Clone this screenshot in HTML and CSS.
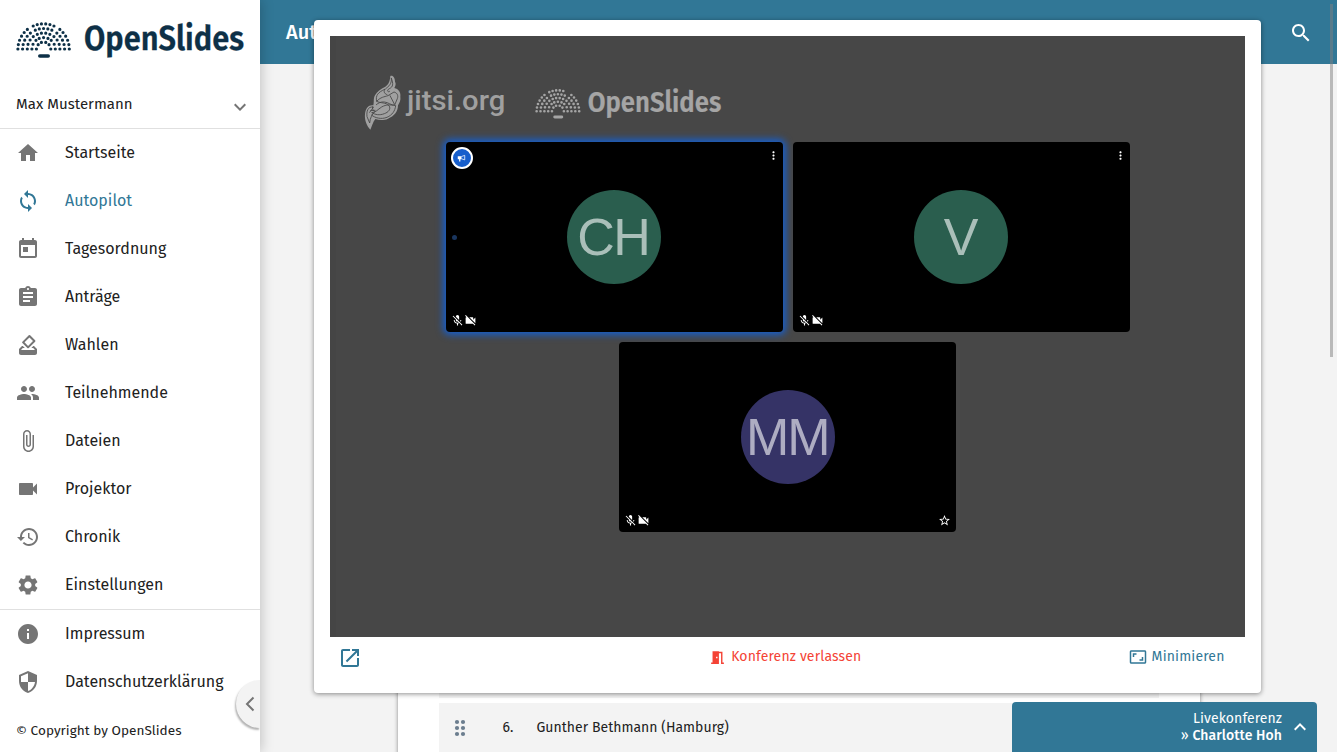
FILE: index.html
```html
<!DOCTYPE html>
<html lang="de">
<head>
<meta charset="utf-8">
<title>OpenSlides – Autopilot</title>
<link rel="stylesheet" href="styles.css">
</head>
<body>
<svg class="defs" aria-hidden="true">
  <symbol id="plenum" viewBox="0 0 56 38">
    <g transform="translate(27.6 28)" fill="none" stroke="currentColor" stroke-width="3.2" stroke-linecap="round" stroke-dasharray="0 1">
      <g id="wedge">
        <path pathLength="5.01" d="M-25.7 0A25.7 25.7 0 0 1-16.2-19.6"/>
        <path pathLength="4.01" d="M-21 0A21 21 0 0 1-13.2-16"/>
        <path pathLength="3.01" d="M-16.3 0A16.3 16.3 0 0 1-10.3-12.5"/>
        <path pathLength="2.01" d="M-11.7 0A11.7 11.7 0 0 1-7.6-8.7"/>
        <path pathLength="1.01" d="M-7.2 0A7 7 0 0 1-5.4-4.4"/>
      </g>
      <use href="#wedge" transform="scale(-1 1)"/>
      <path pathLength="5.01" d="M-10.4-23A25.7 25.7 0 0 1 10.4-23"/>
      <path pathLength="4.01" d="M-8.3-18.8A21 21 0 0 1 8.3-18.8"/>
      <path pathLength="3.01" d="M-6.3-14.7A16.3 16.3 0 0 1 6.3-14.7"/>
      <path pathLength="2.01" d="M-4.4-10.6A11.7 11.7 0 0 1 4.4-10.6"/>
      <path pathLength="1.01" d="M-2.2-6.6L2.2-6.6"/>
    </g>
    <rect x="22" y="33.2" width="12" height="3.6" rx="1.8" fill="currentColor"/>
  </symbol>
  <symbol id="micoff" viewBox="0 0 24 24"><path d="M19 11h-1.7c0 .74-.16 1.43-.43 2.05l1.23 1.23c.56-.98.9-2.09.9-3.28zm-4.02.17c0-.06.02-.11.02-.17V5c0-1.66-1.34-3-3-3S9 3.34 9 5v.18l5.98 5.99zM4.27 3L3 4.27l6.01 6.01V11c0 1.66 1.33 3 2.99 3 .22 0 .44-.03.65-.08l1.66 1.66c-.71.33-1.5.52-2.31.52-2.76 0-5.3-2.1-5.3-5.1H5c0 3.41 2.72 6.23 6 6.72V21h2v-3.28c.91-.13 1.77-.45 2.54-.9L19.73 21 21 19.73 4.27 3z"/></symbol>
  <symbol id="camoff" viewBox="0 0 24 24"><path d="M21 6.5l-4 4V7c0-.55-.45-1-1-1H9.82L21 17.18V6.5zM3.27 2L2 3.27 4.73 6H4c-.55 0-1 .45-1 1v10c0 .55.45 1 1 1h12c.21 0 .39-.08.54-.18L19.73 21 21 19.73 3.27 2z"/></symbol>
  <symbol id="more" viewBox="0 0 24 24"><path d="M12 8c1.1 0 2-.9 2-2s-.9-2-2-2-2 .9-2 2 .9 2 2 2zm0 2c-1.1 0-2 .9-2 2s.9 2 2 2 2-.9 2-2-.9-2-2-2zm0 6c-1.1 0-2 .9-2 2s.9 2 2 2 2-.9 2-2-.9-2-2-2z"/></symbol>
</svg>

<div class="app">
  <aside class="sidebar">
    <div class="logo">
      <svg class="plenum"><use href="#plenum"/></svg>
      <svg class="word" viewBox="0 0 161 38"><text x="0" y="28.5" class="wordmark" textLength="160" lengthAdjust="spacingAndGlyphs">OpenSlides</text></svg>
    </div>
    <div class="user"><span>Max Mustermann</span><svg class="icon" viewBox="0 0 24 24"><path d="M16.59 8.59L12 13.17 7.41 8.59 6 10l6 6 6-6z"/></svg></div>
    <nav class="menu">
      <a class="item"><svg class="icon" viewBox="0 0 24 24"><path d="M10 20v-6h4v6h5v-8h3L12 3 2 12h3v8z"/></svg><span>Startseite</span></a>
      <a class="item active"><svg class="icon" viewBox="0 0 24 24"><path d="M12 4V1L8 5l4 4V6c3.31 0 6 2.69 6 6 0 1.01-.25 1.97-.7 2.8l1.46 1.46C19.54 15.03 20 13.57 20 12c0-4.42-3.58-8-8-8zm0 14c-3.31 0-6-2.69-6-6 0-1.01.25-1.97.7-2.8L5.24 7.74C4.46 8.97 4 10.43 4 12c0 4.42 3.58 8 8 8v3l4-4-4-4v3z"/></svg><span>Autopilot</span></a>
      <a class="item"><svg class="icon" viewBox="0 0 24 24"><path d="M19 3h-1V1h-2v2H8V1H6v2H5c-1.11 0-1.99.9-1.99 2L3 19c0 1.1.89 2 2 2h14c1.1 0 2-.9 2-2V5c0-1.1-.9-2-2-2zm0 16H5V8h14v11zM7 10h5v5H7z"/></svg><span>Tagesordnung</span></a>
      <a class="item"><svg class="icon" viewBox="0 0 24 24"><path d="M19 3h-4.18C14.4 1.84 13.3 1 12 1c-1.3 0-2.4.84-2.82 2H5c-1.1 0-2 .9-2 2v14c0 1.1.9 2 2 2h14c1.1 0 2-.9 2-2V5c0-1.1-.9-2-2-2zm-7 0c.55 0 1 .45 1 1s-.45 1-1 1-1-.45-1-1 .45-1 1-1zm2 14H7v-2h7v2zm3-4H7v-2h10v2zm0-4H7V7h10v2z"/></svg><span>Anträge</span></a>
      <a class="item"><svg class="icon" viewBox="0 0 24 24"><path d="M18 13h-.68l-2 2h1.91L19 17H5l1.78-2h2.05l-2-2H6l-3 3v4c0 1.1.89 2 1.99 2H19c1.1 0 2-.89 2-2v-4l-3-3zm-1-5.05l-4.95 4.95-3.54-3.54 4.95-4.95L17 7.95zm-4.24-5.66L6.39 8.66a.996.996 0 0 0 0 1.41l4.95 4.95c.39.39 1.02.39 1.41 0l6.36-6.36a.996.996 0 0 0 0-1.41L14.16 2.3a.975.975 0 0 0-1.4-.01z"/></svg><span>Wahlen</span></a>
      <a class="item"><svg class="icon" viewBox="0 0 24 24"><path d="M16 11c1.66 0 2.99-1.34 2.99-3S17.66 5 16 5c-1.66 0-3 1.34-3 3s1.34 3 3 3zm-8 0c1.66 0 2.99-1.34 2.99-3S9.66 5 8 5C6.34 5 5 6.34 5 8s1.34 3 3 3zm0 2c-2.33 0-7 1.17-7 3.5V19h14v-2.5c0-2.33-4.67-3.5-7-3.5zm8 0c-.29 0-.62.02-.97.05 1.16.84 1.97 1.97 1.97 3.45V19h6v-2.5c0-2.33-4.67-3.5-7-3.5z"/></svg><span>Teilnehmende</span></a>
      <a class="item"><svg class="icon" viewBox="0 0 24 24"><path d="M16.5 6v11.5c0 2.21-1.79 4-4 4s-4-1.79-4-4V5c0-1.38 1.12-2.5 2.5-2.5s2.5 1.12 2.5 2.5v10.5c0 .55-.45 1-1 1s-1-.45-1-1V6H10v9.5c0 1.38 1.12 2.5 2.5 2.5s2.5-1.12 2.5-2.5V5c0-2.21-1.79-4-4-4S7 2.79 7 5v12.5c0 3.04 2.46 5.5 5.5 5.5s5.5-2.46 5.5-5.5V6h-1.5z"/></svg><span>Dateien</span></a>
      <a class="item"><svg class="icon" viewBox="0 0 24 24"><path d="M17 10.5V7c0-.55-.45-1-1-1H4c-.55 0-1 .45-1 1v10c0 .55.45 1 1 1h12c.55 0 1-.45 1-1v-3.5l4 4v-11l-4 4z"/></svg><span>Projektor</span></a>
      <a class="item"><svg class="icon" viewBox="0 0 24 24"><path d="M13 3c-4.97 0-9 4.03-9 9H1l3.89 3.89.07.14L9 12H6c0-3.87 3.13-7 7-7s7 3.13 7 7-3.13 7-7 7c-1.93 0-3.68-.79-4.94-2.06l-1.42 1.42C8.27 19.99 10.51 21 13 21c4.97 0 9-4.03 9-9s-4.03-9-9-9zm-1 5v5l4.28 2.54.72-1.21-3.5-2.08V8H12z"/></svg><span>Chronik</span></a>
      <a class="item"><svg class="icon" viewBox="0 0 24 24"><path d="M19.14 12.94c.04-.3.06-.61.06-.94 0-.32-.02-.64-.07-.94l2.03-1.58c.18-.14.23-.41.12-.61l-1.92-3.32c-.12-.22-.37-.29-.59-.22l-2.39.96c-.5-.38-1.03-.7-1.62-.94l-.36-2.54c-.04-.24-.24-.41-.48-.41h-3.84c-.24 0-.43.17-.47.41l-.36 2.54c-.59.24-1.13.57-1.62.94l-2.39-.96c-.22-.08-.47 0-.59.22L2.74 8.87c-.12.21-.08.47.12.61l2.03 1.58c-.05.3-.09.63-.09.94s.02.64.07.94l-2.03 1.58c-.18.14-.23.41-.12.61l1.92 3.32c.12.22.37.29.59.22l2.39-.96c.5.38 1.03.7 1.62.94l.36 2.54c.05.24.24.41.48.41h3.84c.24 0 .44-.17.47-.41l.36-2.54c.59-.24 1.13-.56 1.62-.94l2.39.96c.22.08.47 0 .59-.22l1.92-3.32c.12-.22.07-.47-.12-.61l-2.01-1.58zM12 15.6c-1.98 0-3.6-1.62-3.6-3.6s1.62-3.6 3.6-3.6 3.6 1.62 3.6 3.6-1.62 3.6-3.6 3.6z"/></svg><span>Einstellungen</span></a>
    </nav>
    <nav class="menu">
      <a class="item"><svg class="icon" viewBox="0 0 24 24"><path d="M12 2C6.48 2 2 6.48 2 12s4.48 10 10 10 10-4.48 10-10S17.52 2 12 2zm1 15h-2v-6h2v6zm0-8h-2V7h2v2z"/></svg><span>Impressum</span></a>
      <a class="item"><svg class="icon" viewBox="0 0 24 24"><path d="M12 1L3 5v6c0 5.55 3.84 10.74 9 12 5.16-1.26 9-6.45 9-12V5l-9-4zm0 10.99h7c-.53 4.12-3.28 7.79-7 8.94V12H5V6.3l7-3.11v8.8z"/></svg><span>Datenschutzerklärung</span></a>
    </nav>
    <div class="copyright">© Copyright by OpenSlides</div>
    <div class="collapse"><svg viewBox="0 0 10 16"><path d="M8.5 1.5L2 8l6.5 6.5" fill="none" stroke="currentColor" stroke-width="2"/></svg></div>
  </aside>

  <main class="main">
    <header class="header"><h1>Autopilot</h1><svg class="icon" viewBox="0 0 24 24"><path d="M15.5 14h-.79l-.28-.27C15.41 12.59 16 11.11 16 9.5 16 5.91 13.09 3 9.5 3S3 5.91 3 9.5 5.91 16 9.5 16c1.61 0 3.09-.59 4.23-1.57l.27.28v.79l5 4.99L20.49 19l-4.99-5zm-6 0C7.01 14 5 11.99 5 9.5S7.01 5 9.5 5 14 7.01 14 9.5 11.99 14 9.5 14z"/></svg></header>
    <section class="card">
      <div class="row"></div>
      <div class="row">
        <svg class="grip" viewBox="0 0 12 18"><circle cx="3" cy="3" r="2.1"/><circle cx="9" cy="3" r="2.1"/><circle cx="3" cy="9" r="2.1"/><circle cx="9" cy="9" r="2.1"/><circle cx="3" cy="15" r="2.1"/><circle cx="9" cy="15" r="2.1"/></svg>
        <span class="num">6.</span><span class="speaker">Gunther Bethmann (Hamburg)</span>
      </div>
    </section>
  </main>
</div>

<div class="scrollbar"></div>

<div class="dialog">
  <div class="video">
    <div class="brands">
      <svg class="jitsi" viewBox="40 42 430 172">
        <path fill="#a0a0a0" d="M122 48c8-3 14 6 14 17 4 6 1 13-2 19 12 3 20 12 18 26 2 11-3 19-7 26 0 19-12 33-30 40-13 6-27 5-38 1-7 9-10 20-15 32-12-13-18-31-16-48 2-17 12-28 25-25 3-13-1-19 5-30 6-12 17-19 31-26 10-6 14-18 15-32z"/>
        <g fill="none" stroke="#474747" stroke-width="2.6" stroke-linecap="round">
          <path d="M125 55c7 17 5 26-6 31-9 4-5 13 1 8M125 55c2 17-8 24-17 31-8 7-5 15 4 18M105 88c-20 9-28 18-24 36 12-13 22-13 34-17l18-11c11 3 13 12 10 20l-8 19c-10 2-19-8-31-9-11-1-18 3-24 8M81 124c13 7 27 2 37 13 7 10-2 20-14 24-15 6-27 3-38-3 14-1 17-9 30-17 14-8 26-7 42-4-2 16-10 28-26 35-18 7-36 2-47-7M69 141c-15-2-19 14-17 29l8 19c1-16 8-26 15-34-5-5-8-8-6-14zM71 142l-11 15M121 107l13 25M76 151l-13 1"/>
        </g>
        <text x="172" y="151" class="jitsi-text" textLength="295" lengthAdjust="spacingAndGlyphs">jitsi.org</text>
      </svg>
      <div class="brand-os">
        <svg class="plenum"><use href="#plenum"/></svg>
        <svg class="word" viewBox="0 0 161 38"><text x="0" y="28.5" class="wordmark" textLength="161" lengthAdjust="spacingAndGlyphs">OpenSlides</text></svg>
      </div>
    </div>
    <div class="tiles">
      <div class="tile speaking">
        <div class="top"><span class="badge"><svg viewBox="0 0 12 10"><path d="M1 2.5h5v4H4.5v3H2.8v-3H1z" fill="#fff"/><path d="M6 3l4.3-1.5v6L6 6" fill="none" stroke="#fff" stroke-width="1"/></svg></span><svg class="dots"><use href="#more"/></svg></div>
        <div class="middle"><i class="level"></i><div class="avatar">CH</div></div>
        <div class="bottom"><svg class="small"><use href="#micoff"/></svg><svg class="small"><use href="#camoff"/></svg></div>
      </div>
      <div class="tile">
        <div class="top"><svg class="dots"><use href="#more"/></svg></div>
        <div class="middle"><div class="avatar">V</div></div>
        <div class="bottom"><svg class="small"><use href="#micoff"/></svg><svg class="small"><use href="#camoff"/></svg></div>
      </div>
      <div class="tile">
        <div class="top"></div>
        <div class="middle"><div class="avatar violet">MM</div></div>
        <div class="bottom"><svg class="small"><use href="#micoff"/></svg><svg class="small"><use href="#camoff"/></svg><svg class="small star" viewBox="0 0 24 24"><path d="M22 9.24l-7.19-.62L12 2 9.19 8.63 2 9.24l5.46 4.73L5.82 21 12 17.27 18.18 21l-1.63-7.03L22 9.24zM12 15.4l-3.76 2.27 1-4.28-3.32-2.88 4.38-.38L12 6.1l1.71 4.04 4.38.38-3.32 2.88 1 4.28L12 15.4z"/></svg></div>
      </div>
    </div>
  </div>
  <div class="actions">
    <svg class="icon open" viewBox="0 0 24 24"><path d="M19 19H5V5h7V3H5c-1.11 0-2 .9-2 2v14c0 1.1.89 2 2 2h14c1.1 0 2-.9 2-2v-7h-2v7zM14 3v2h3.59l-9.83 9.83 1.41 1.41L19 6.41V10h2V3h-7z"/></svg>
    <span class="action leave"><svg viewBox="0 0 24 24"><path d="M14 6v15H3v-2h2V3h9v1h5v15h2v2h-4V6h-3zm-4 5v2h2v-2h-2z"/></svg><span>Konferenz verlassen</span></span>
    <span class="action minimize"><svg viewBox="0 0 24 24"><path d="M19 12h-2v3h-3v2h5v-5zM7 9h3V7H5v5h2V9zm14-6H3c-1.1 0-2 .9-2 2v14c0 1.1.9 2 2 2h18c1.1 0 2-.9 2-2V5c0-1.1-.9-2-2-2zm0 16.01H3V4.99h18v14.02z"/></svg><span>Minimieren</span></span>
  </div>
</div>

<div class="livebar">
  <div class="livetext"><div class="live">Livekonferenz</div><div class="name">» <b>Charlotte Hoh</b></div></div>
  <svg class="icon" viewBox="0 0 24 24"><path d="M12 8l-6 6 1.41 1.41L12 10.83l4.59 4.58L18 14z"/></svg>
</div>
</body>
</html>
```
FILE: styles.css
```css
* { box-sizing: border-box; }
body { margin: 0; height: 752px; overflow: hidden; position: relative; font-family: "Fira Sans", "Noto Sans", sans-serif; color: #212121; background: #f3f3f3; }
svg { display: block; fill: currentColor; flex: none; overflow: visible; }
.defs { position: absolute; width: 0; height: 0; }
.icon { width: 24px; height: 24px; }
.app { display: flex; height: 752px; }

.sidebar { width: 260px; background: #fff; position: relative; z-index: 2; box-shadow: 1px 0 12px rgba(0,0,0,.22); clip-path: inset(0 -20px 0 0); flex: none; }
.logo { height: 37px; margin: 21px 0 0 16px; color: #0d3047; display: flex; gap: 11.5px; }
.logo .plenum { width: 56px; height: 38px; }
.logo .word { width: 161px; height: 38px; }
.wordmark { font: 600 34.5px "Fira Sans", "Noto Sans", sans-serif; fill: currentColor; stroke: currentColor; stroke-width: .3px; }
.user { height: 71px; padding: 21px 8px 0 16px; display: flex; justify-content: space-between; border-bottom: 1px solid #e0e0e0; font-size: 15px; letter-spacing: .03px; }
.user span { line-height: 51px; }
.user .icon { margin-top: 16px; color: #757575; }
.menu { display: flex; flex-direction: column; }
.menu + .menu { border-top: 1px solid #e0e0e0; }
.item { height: 48px; padding-left: 16px; display: flex; align-items: center; gap: 25px; font-size: 16px; }
.item span { padding-bottom: 1px; }
.item .icon { color: #757575; }
.item.active, .item.active .icon { color: #317796; }
.copyright { padding-left: 16px; line-height: 20px; margin-top: 15px; font-size: 13.6px; }
.collapse { position: absolute; right: 0; top: 680px; width: 24px; height: 48px; border-radius: 24px 0 0 24px; background: #f3f3f3; box-shadow: -1px 2px 2px rgba(0,0,0,.3); clip-path: inset(-4px 0 -6px -6px); display: flex; align-items: center; padding-left: 9px; color: #757575; }
.collapse svg { width: 10px; height: 16px; }

.main { flex: 1; min-width: 0; }
.header { height: 64px; background: #317796; color: #fff; padding: 0 24px 0 26px; display: flex; align-items: center; justify-content: space-between; }
.header h1 { margin: 0; font-size: 20px; font-weight: 500; }
.header .icon { margin-top: 2px; }
.card { margin: 581px 137px 0 138px; padding: 0 41px; height: 110px; background: #fff; box-shadow: 0 0 4px rgba(0,0,0,.45); }
.row { height: 53px; background: #f3f3f3; margin-bottom: 5px; display: flex; align-items: flex-start; padding: 16px 0 0 15px; font-size: 14px; line-height: 18px; letter-spacing: .03px; }
.grip { width: 12px; height: 18px; color: #6b7d8e; }
.num { margin-left: 36.5px; width: 34px; }

.scrollbar { position: absolute; right: 4px; top: 4px; width: 3px; height: 353px; background: rgba(128,128,128,.5); }
.dialog { position: absolute; z-index: 5; left: 314px; top: 20px; width: 947px; height: 673px; border-radius: 4px; background: #fff; padding: 16px; box-shadow: 0 1px 5px rgba(0,0,0,.45); }
.video { height: 601px; background: #474747; box-shadow: inset 6px 0 #454545; }
.brands { height: 106px; padding: 38px 0 0 33.3px; display: flex; gap: 28.5px; }
.jitsi { width: 143.3px; height: 57.3px; }
.jitsi-text { font: 500 82px "Roboto", sans-serif; fill: #a0a0a0; }
.brand-os { display: flex; gap: 5.5px; margin-top: 13.5px; color: #a5a5a5; }
.brand-os .plenum { width: 46.5px; height: 31.5px; }
.brand-os .word { width: 135px; height: 31.5px; }
.tiles { display: flex; flex-wrap: wrap; justify-content: center; gap: 10px; padding: 0 100px; }
.tile { width: 337px; height: 190px; background: #000; border-radius: 4px; color: #fff; display: flex; flex-direction: column; }
.speaking { box-shadow: 0 0 7px 3px #165ecc; }
.top { height: 47.6px; padding: 5px 3px 0 5px; display: flex; align-items: flex-start; }
.badge { width: 22px; height: 22px; border-radius: 50%; border: 2px solid #fff; background: #165ecc; display: flex; align-items: center; justify-content: center; }
.badge svg { width: 9px; height: 8px; }
.dots { width: 13px; height: 13px; margin: 2px 0 0 auto; }
.middle { height: 95.4px; display: flex; justify-content: center; position: relative; }
.level { position: absolute; left: 6px; top: 45px; width: 5px; height: 5px; border-radius: 50%; background: #1a365f; }
.avatar { width: 94.5px; height: 94.5px; border-radius: 50%; background: #2a5e4e; color: #aabfb9; font: 52px/94px "Liberation Sans", sans-serif; letter-spacing: -1.5px; text-indent: -1.5px; text-align: center; white-space: nowrap; }
.violet { background: #353366; color: #aeadc2; margin-left: 1px; letter-spacing: -2px; }
.bottom { padding: 29px 5px 0; display: flex; }
.small { width: 13px; height: 13px; }
.star { margin-left: auto; }
.actions { height: 42px; padding: 0 20.5px 0 8px; display: grid; grid-template-columns: 1fr auto 1fr; align-items: center; font-size: 14px; letter-spacing: .15px; }
.open { color: #317796; }
.action { display: flex; align-items: center; gap: 5px; margin-top: -2px; }
.action svg { width: 17px; height: 17px; }
.action span { margin-top: -1px; }
.leave { color: #f44336; margin-left: 8px; }
.minimize { color: #317796; justify-self: end; }
.minimize svg { width: 18px; height: 18px; }
.livebar { position: absolute; z-index: 6; left: 1012px; top: 702px; width: 305px; height: 50px; background: #317796; color: #fff; border-radius: 4px 4px 0 0; display: flex; justify-content: flex-end; align-items: center; gap: 6px; padding-right: 5px; font-size: 14px; line-height: 17px; text-align: right; }
.livetext { margin-top: -1px; letter-spacing: .08px; }
.name b { font-weight: 500; }
```
